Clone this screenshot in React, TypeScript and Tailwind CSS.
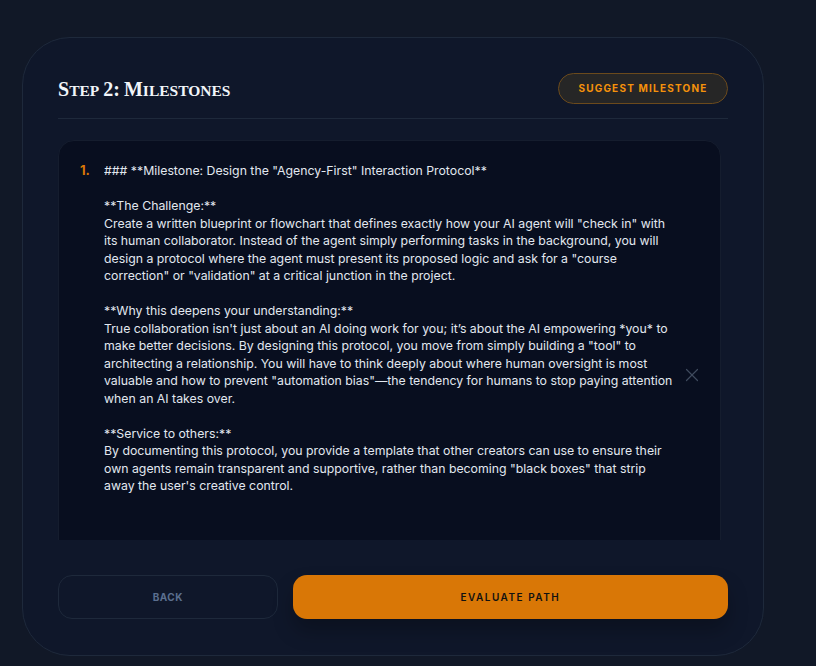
import React from "react";
import { X } from "lucide-react";

const lines = [
  '### **Milestone: Design the "Agency-First" Interaction Protocol**',
  "",
  "**The Challenge:**",
  'Create a written blueprint or flowchart that defines exactly how your AI agent will "check in" with',
  "its human collaborator. Instead of the agent simply performing tasks in the background, you will",
  'design a protocol where the agent must present its proposed logic and ask for a "course',
  'correction" or "validation" at a critical junction in the project.',
  "",
  "**Why this deepens your understanding:**",
  "True collaboration isn't just about an AI doing work for you; it\u2019s about the AI empowering *you* to",
  'make better decisions. By designing this protocol, you move from simply building a "tool" to',
  "architecting a relationship. You will have to think deeply about where human oversight is most",
  'valuable and how to prevent "automation bias"\u2014the tendency for humans to stop paying attention',
  "when an AI takes over.",
  "",
  "**Service to others:**",
  "By documenting this protocol, you provide a template that other creators can use to ensure their",
  'own agents remain transparent and supportive, rather than becoming "black boxes" that strip',
  "away the user's creative control.",
];

function Word({ big, rest }: { big: string; rest: string }) {
  return (
    <span>
      <span className="text-[20px]">{big}</span>
      <span className="text-[15.5px]">{rest}</span>
    </span>
  );
}

export default function App() {
  return (
    <div className="min-h-[666px] w-full bg-[#111827] pt-[37px] pl-[22px] font-['Inter',sans-serif]">
      <div className="w-[742px] h-[619px] rounded-[48px] border border-[#1e293b] bg-[#0f172a] p-[35px] flex flex-col">
        <div className="flex items-center justify-between border-b border-[#1e293b] pb-[14px]">
          <h2 className="font-['Liberation_Serif',serif] font-bold text-[#f1f5f9] leading-none flex items-baseline gap-[4px]">
            <Word big="S" rest="TEP" />
            <span className="text-[20px]">2:</span>
            <Word big="M" rest="ILESTONES" />
          </h2>
          <button className="h-[31px] w-[170px] rounded-full border border-[#6b4a1c] bg-[#262626] text-[10px] font-bold tracking-[0.12em] text-[#f5920b] font-['Inter',sans-serif]">
            SUGGEST MILESTONE
          </button>
        </div>

        <div className="mt-[21px] h-[400px] overflow-hidden mr-[7px]">
          <div className="rounded-t-2xl border border-[#151d2e] bg-[#080e1f] h-[470px] flex items-center">
            <div className="flex-1 min-w-0 flex pl-[21px] pt-[21px] self-start">
              <span className="w-[24px] shrink-0 text-[13px] font-bold text-[#d97706] leading-[17.5px]">1.</span>
              <div className="whitespace-pre text-[12.3px] leading-[17.5px] text-[#e2e8f0] overflow-hidden">
                {lines.map((l, i) => (
                  <div key={i} className="h-[17.5px]">{l}</div>
                ))}
              </div>
            </div>
            <div className="w-[22px] mr-[17px] flex justify-center text-[#3f4b5e] shrink-0">
              <X size={22} strokeWidth={1.3} />
            </div>
          </div>
        </div>

        <div className="mt-[35px] flex gap-[15px]">
          <button className="flex-1 h-[44px] rounded-[14px] border border-[#1e293b] bg-[#0f172a] text-[10px] font-bold tracking-[0.05em] text-[#5b6f8f]">
            BACK
          </button>
          <button className="flex-[2] h-[44px] rounded-[14px] bg-[#d97706] text-[10px] font-semibold tracking-[0.15em] text-[#111111] shadow-[0_12px_20px_rgba(0,0,0,0.25)]">
            EVALUATE PATH
          </button>
        </div>
      </div>
    </div>
  );
}
